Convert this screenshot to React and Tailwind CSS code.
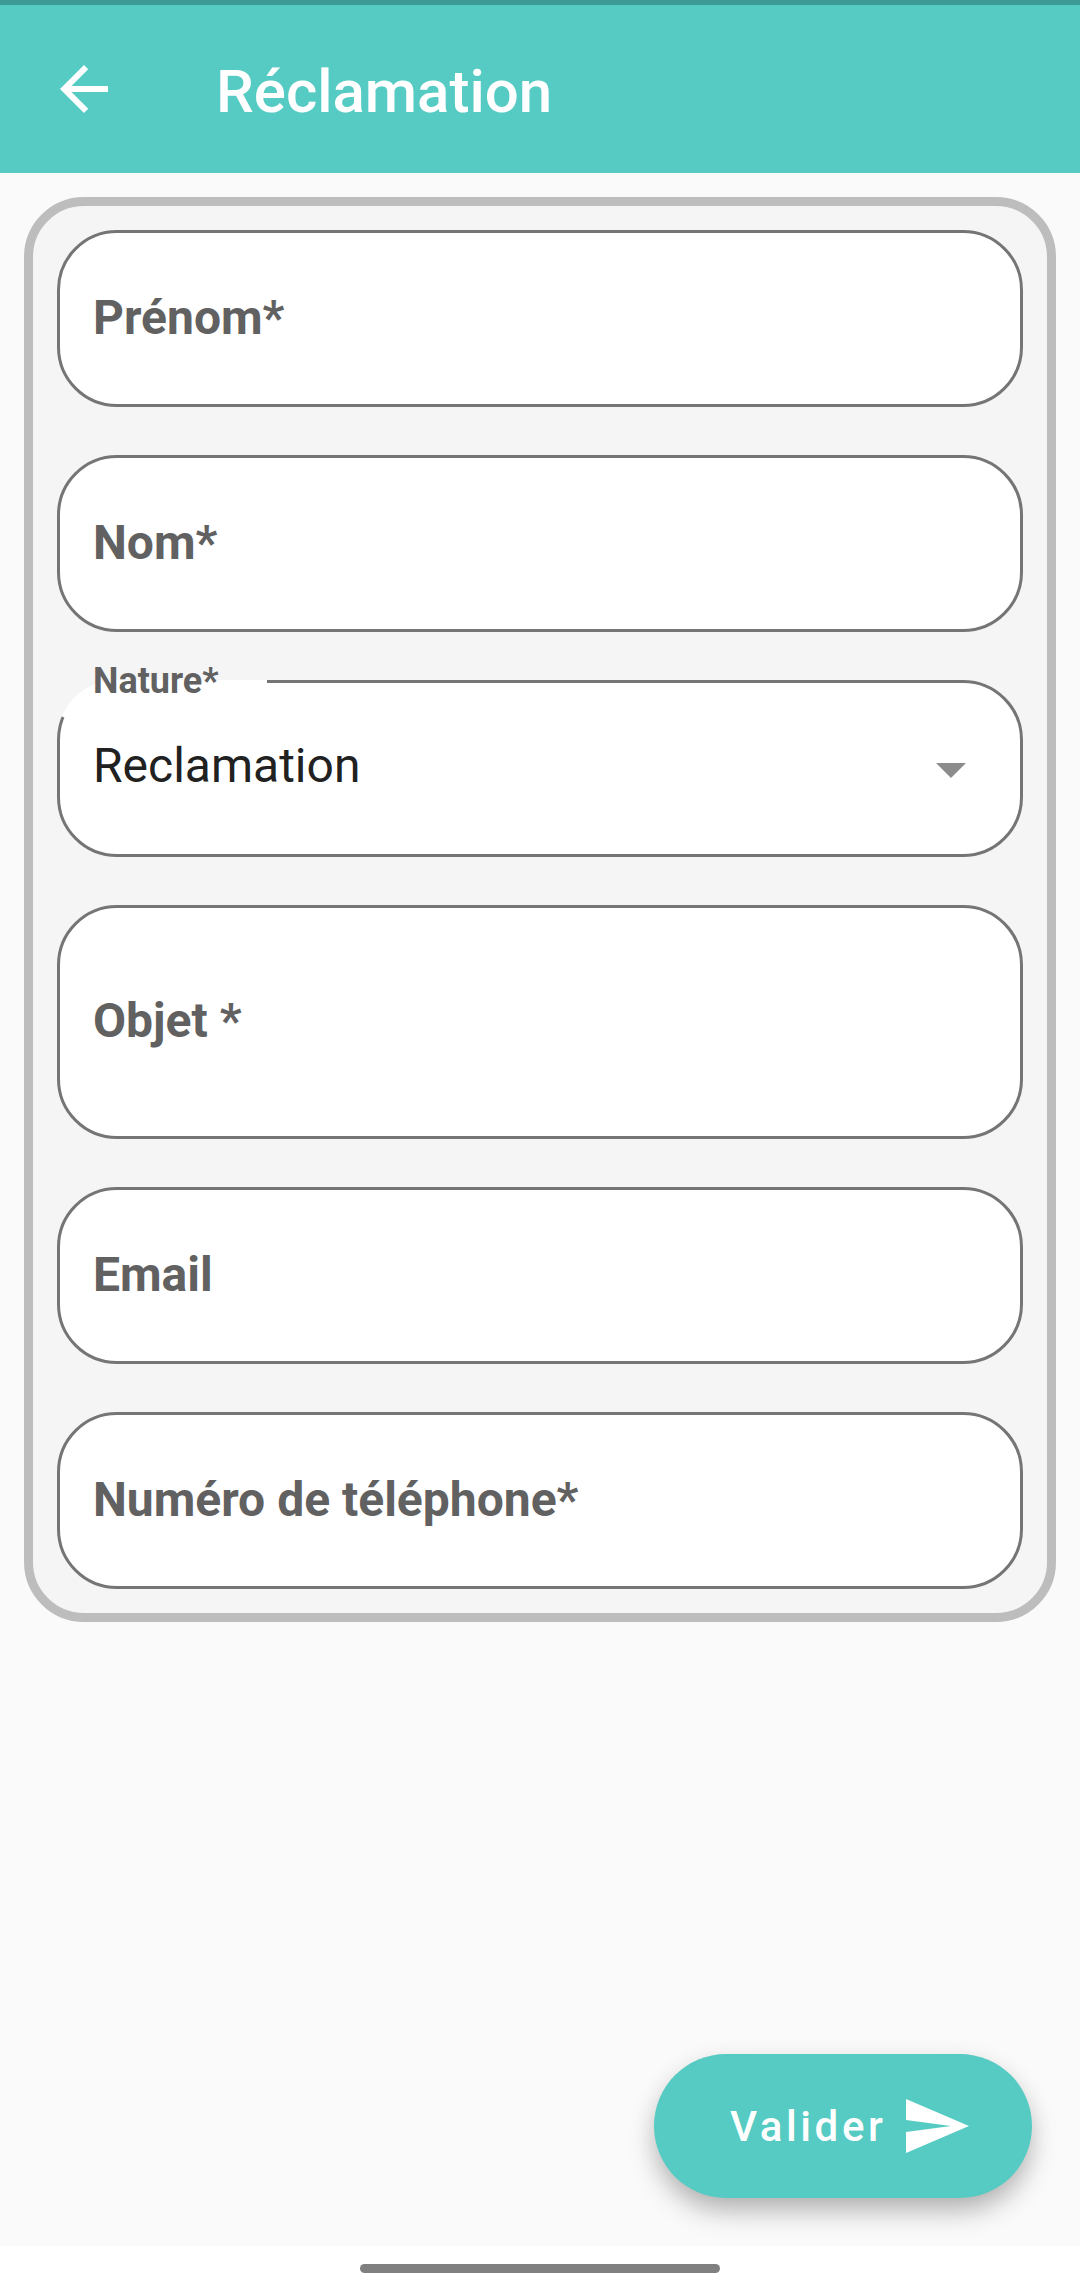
import { MdArrowBack, MdArrowDropDown, MdSend } from 'react-icons/md';

const Field = ({ label, tall }) => (
  <div
    className={`flex items-center rounded-[60px] border-[3px] border-[#757575] bg-white px-[33px] ${
      tall ? 'h-[234px] pb-[3px]' : 'h-[177px] pb-px'
    }`}
  >
    <label className="text-5xl font-bold text-[#616161]">{label}</label>
  </div>
);

const SelectField = ({ label, value }) => (
  <div className="relative flex h-[177px] items-center justify-between rounded-[60px] bg-white px-[36px]">
    {/* outline with a notch for the floating label */}
    <div className="absolute inset-0 rounded-[60px] border-[3px] border-[#757575] [clip-path:polygon(210px_0,100%_0,100%_100%,0_100%,0_34px,10px_39px,210px_39px)]" />
    <label className="absolute -top-[20px] left-[36px] text-[36px] leading-[42px] font-bold text-[#616161]">
      {label}
    </label>
    <span className="pb-[5px] text-5xl text-[#212121]">{value}</span>
    <MdArrowDropDown className="size-[72px] text-[#8c8c8c]" />
  </div>
);

const App = () => {
  return (
    <div className="flex h-[2294px] w-[1080px] flex-col overflow-hidden bg-[#fafafa] font-[Roboto,sans-serif]">
      <div className="h-[5px] bg-[#3d9b95]" />
      <header className="flex h-[168px] items-center bg-[#56cbc3] pl-[48px] text-white">
        <MdArrowBack className="size-[72px]" />
        <h1 className="ml-[96px] pt-[6px] text-6xl font-medium">Réclamation</h1>
      </header>

      <main className="flex flex-1 flex-col px-6 pt-6 pb-12">
        <form className="flex flex-col gap-12 rounded-[60px] border-[9px] border-[#bdbdbd] bg-[#f5f5f5] p-6">
          <Field label="Prénom*" />
          <Field label="Nom*" />
          <SelectField label="Nature*" value="Reclamation" />
          <Field label="Objet *" tall />
          <Field label="Email" />
          <Field label="Numéro de téléphone*" />
        </form>

        <button
          type="button"
          className="mt-auto mr-6 flex h-[144px] w-[378px] items-center self-end rounded-full bg-[#56cbc3] pl-[76px] text-white shadow-[0_15px_28px_-3px_rgba(0,0,0,0.28),0_4px_24px_0_rgba(0,0,0,0.06)]"
        >
          <span className="w-[170px] text-left text-[42px] font-medium tracking-[3.6px]">Valider</span>
          <MdSend className="size-[72px]" />
        </button>
      </main>

      {/* system navigation handle */}
      <footer className="relative flex h-12 justify-center bg-white pt-[18px]">
        <div className="h-[9px] w-[360px] rounded-full bg-[#808080]" />
      </footer>
    </div>
  );
};

export default App;
